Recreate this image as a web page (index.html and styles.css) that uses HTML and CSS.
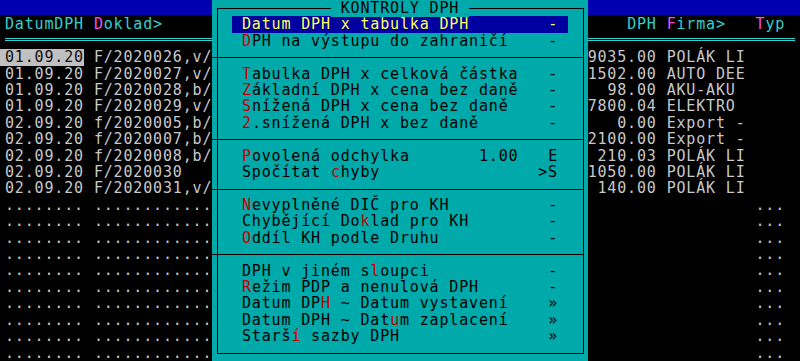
FILE: index.html
```html
<!DOCTYPE html>
<html lang="cs">
<head>
  <meta charset="UTF-8">
  <title>Kontroly DPH</title>
  <link rel="stylesheet" href="styles.css">
</head>
<body>
  <div class="screen">
    <div class="topbar"></div>

    <div class="trow thead">
      <span class="c-date">DatumDPH</span>
      <span class="c-doc"><b class="mark">D</b>oklad&gt;</span>
      <span class="c-amt">DPH</span>
      <span class="c-name"><b class="mark">F</b>irma&gt;</span>
      <span class="c-typ"><b class="mark">T</b>yp</span>
    </div>
    <div class="dline"></div>

    <div class="trow">
      <span class="c-date cur">01.09.20</span>
      <span class="c-doc">F/2020026,v/</span>
      <span class="c-amt">9035.00</span>
      <span class="c-name">POLÁK LI</span>
      <span class="c-typ"></span>
    </div>
    <div class="trow">
      <span class="c-date">01.09.20</span>
      <span class="c-doc">F/2020027,v/</span>
      <span class="c-amt">1502.00</span>
      <span class="c-name">AUTO DEE</span>
      <span class="c-typ"></span>
    </div>
    <div class="trow">
      <span class="c-date">01.09.20</span>
      <span class="c-doc">F/2020028,b/</span>
      <span class="c-amt">98.00</span>
      <span class="c-name">AKU-AKU</span>
      <span class="c-typ"></span>
    </div>
    <div class="trow">
      <span class="c-date">01.09.20</span>
      <span class="c-doc">F/2020029,v/</span>
      <span class="c-amt">7800.04</span>
      <span class="c-name">ELEKTRO</span>
      <span class="c-typ"></span>
    </div>
    <div class="trow">
      <span class="c-date">02.09.20</span>
      <span class="c-doc">f/2020005,b/</span>
      <span class="c-amt">0.00</span>
      <span class="c-name">Export -</span>
      <span class="c-typ"></span>
    </div>
    <div class="trow">
      <span class="c-date">02.09.20</span>
      <span class="c-doc">f/2020007,b/</span>
      <span class="c-amt">2100.00</span>
      <span class="c-name">Export -</span>
      <span class="c-typ"></span>
    </div>
    <div class="trow">
      <span class="c-date">02.09.20</span>
      <span class="c-doc">f/2020008,b/</span>
      <span class="c-amt">210.03</span>
      <span class="c-name">POLÁK LI</span>
      <span class="c-typ"></span>
    </div>
    <div class="trow">
      <span class="c-date">02.09.20</span>
      <span class="c-doc">F/2020030</span>
      <span class="c-amt">1050.00</span>
      <span class="c-name">POLÁK LI</span>
      <span class="c-typ"></span>
    </div>
    <div class="trow">
      <span class="c-date">02.09.20</span>
      <span class="c-doc">F/2020031,v/</span>
      <span class="c-amt">140.00</span>
      <span class="c-name">POLÁK LI</span>
      <span class="c-typ"></span>
    </div>

    <!-- empty rows of the table -->
    <div class="trow empty"><span class="c-date">........</span><span class="c-doc">............</span><span class="c-amt"></span><span class="c-name"></span><span class="c-typ">...</span></div>
    <div class="trow empty"><span class="c-date">........</span><span class="c-doc">............</span><span class="c-amt"></span><span class="c-name"></span><span class="c-typ">...</span></div>
    <div class="trow empty"><span class="c-date">........</span><span class="c-doc">............</span><span class="c-amt"></span><span class="c-name"></span><span class="c-typ">...</span></div>
    <div class="trow empty"><span class="c-date">........</span><span class="c-doc">............</span><span class="c-amt"></span><span class="c-name"></span><span class="c-typ">...</span></div>
    <div class="trow empty"><span class="c-date">........</span><span class="c-doc">............</span><span class="c-amt"></span><span class="c-name"></span><span class="c-typ">...</span></div>
    <div class="trow empty"><span class="c-date">........</span><span class="c-doc">............</span><span class="c-amt"></span><span class="c-name"></span><span class="c-typ">...</span></div>
    <div class="trow empty"><span class="c-date">........</span><span class="c-doc">............</span><span class="c-amt"></span><span class="c-name"></span><span class="c-typ">...</span></div>
    <div class="trow empty"><span class="c-date">........</span><span class="c-doc">............</span><span class="c-amt"></span><span class="c-name"></span><span class="c-typ">...</span></div>
    <div class="trow empty"><span class="c-date">........</span><span class="c-doc">............</span><span class="c-amt"></span><span class="c-name"></span><span class="c-typ">...</span></div>
    <div class="trow empty"><span class="c-date">........</span><span class="c-doc">............</span><span class="c-amt"></span><span class="c-name"></span><span class="c-typ">...</span></div>

    <div class="menu">
      <div class="mtitle"><span>KONTROLY DPH</span></div>

      <div class="mi sel"><span class="lbl">Datum DPH x tabulka DPH</span><span class="key">-</span></div>
      <div class="mi"><span class="lbl"><b class="hot">D</b>PH na výstupu do zahraničí</span><span class="key">-</span></div>
      <div class="msep"></div>
      <div class="mi"><span class="lbl"><b class="hot">T</b>abulka DPH x celková částka</span><span class="key">-</span></div>
      <div class="mi"><span class="lbl"><b class="hot">Z</b>ákladní DPH x cena bez daně</span><span class="key">-</span></div>
      <div class="mi"><span class="lbl"><b class="hot">S</b>nížená DPH x cena bez daně</span><span class="key">-</span></div>
      <div class="mi"><span class="lbl"><b class="hot">2</b>.snížená DPH x bez daně</span><span class="key">-</span></div>
      <div class="msep"></div>
      <div class="mi"><span class="lbl"><b class="hot">P</b>ovolená odchylka</span><span class="val">1.00</span><span class="key">E</span></div>
      <div class="mi"><span class="lbl">Spočítat <b class="hot">c</b>hyby</span><span class="key">&gt;S</span></div>
      <div class="msep"></div>
      <div class="mi"><span class="lbl"><b class="hot">N</b>evyplněné DIČ pro KH</span><span class="key">-</span></div>
      <div class="mi"><span class="lbl">Chybějící Do<b class="hot">k</b>lad pro KH</span><span class="key">-</span></div>
      <div class="mi"><span class="lbl"><b class="hot">O</b>ddíl KH podle Druhu</span><span class="key">-</span></div>
      <div class="msep"></div>
      <div class="mi"><span class="lbl">DPH v jiném s<b class="hot">l</b>oupci</span><span class="key">-</span></div>
      <div class="mi"><span class="lbl"><b class="hot">R</b>ežim PDP a nenulová DPH</span><span class="key">-</span></div>
      <div class="mi"><span class="lbl">Datum DP<b class="hot">H</b> ~ Datum vystavení</span><span class="key">»</span></div>
      <div class="mi"><span class="lbl">Datum DPH ~ Dat<b class="hot">u</b>m zaplacení</span><span class="key">»</span></div>
      <div class="mi"><span class="lbl">Starš<b class="hot">í</b> sazby DPH</span><span class="key">»</span></div>
    </div>
  </div>
</body>
</html>
```

FILE: styles.css
```css
:root {
  --cw: 9.875px;          /* one text cell */
  --rh: 16.41px;          /* one text row */
  --black: #000000;
  --grey: #c8c8c8;
  --cyan: #30d0d0;
  --magenta: #f050f0;
  --blue: #0000b0;
  --sel-blue: #0000a0;
  --teal: #00aaaa;
  --red: #c00000;
  --yellow: #ffff55;
}

body {
  margin: 0;
  background-color: var(--black);
}

.screen {
  position: relative;
  width: 800px;
  height: 361px;
  overflow: hidden;
  background-color: var(--black);
  color: var(--grey);
  font-family: 'DejaVu Sans Mono', monospace;
  font-size: 15px;
  letter-spacing: 0.844px;
  line-height: var(--rh);
}

b {
  font-weight: normal;
}

.topbar {
  height: 15px;
  margin-bottom: 1.41px;
  background-color: var(--blue);
}

/* table rows */
.trow {
  display: grid;
  grid-template-columns: calc(8 * var(--cw)) calc(12 * var(--cw)) calc(44 * var(--cw)) calc(8 * var(--cw)) calc(3 * var(--cw));
  column-gap: var(--cw);
  height: var(--rh);
  margin: 0 5px;
}

.trow span {
  white-space: pre;
}

.c-amt {
  text-align: right;
}

.thead {
  color: var(--cyan);
}

.thead .mark {
  color: var(--magenta);
}

.c-date.cur {
  margin-left: -5px;
  padding-left: 5px;
  background-color: #c0c0c0;
  color: #101010;
}

.dline {
  height: 1px;
  margin: 5.2px 5px 8.21px;
  border-top: 1px solid var(--cyan);
  border-bottom: 1px solid var(--cyan);
}

/* popup menu */
.menu {
  position: absolute;
  top: 0;
  left: calc(5px + 21 * var(--cw));
  width: calc(38 * var(--cw));
  height: 361px;
  background-color: var(--teal);
  color: var(--black);
}

.menu::before {
  content: "";
  position: absolute;
  top: calc(var(--rh) / 2);
  bottom: calc(var(--rh) / 2 - 1px);
  left: calc(var(--cw) / 2);
  right: calc(var(--cw) / 2 - 1px);
  border: 1px solid var(--black);
}

.mtitle {
  height: var(--rh);
  text-align: center;
}

.mtitle span {
  position: relative;
  padding: 0 var(--cw);
  background-color: var(--teal);
}

.mi {
  display: flex;
  height: var(--rh);
  margin: 0 calc(2 * var(--cw));
  padding: 0 var(--cw);
  white-space: pre;
}

.mi .lbl {
  flex: 1;
}

.mi .val {
  margin-right: calc(3 * var(--cw));
}

.mi.sel {
  background-color: var(--sel-blue);
  color: var(--yellow);
}

.hot {
  color: var(--red);
}

.msep {
  height: calc(var(--rh) / 2);
  margin-right: calc(var(--cw) / 2);
  margin-bottom: calc(var(--rh) / 2 - 1px);
  border-bottom: 1px solid var(--black);
}
```
